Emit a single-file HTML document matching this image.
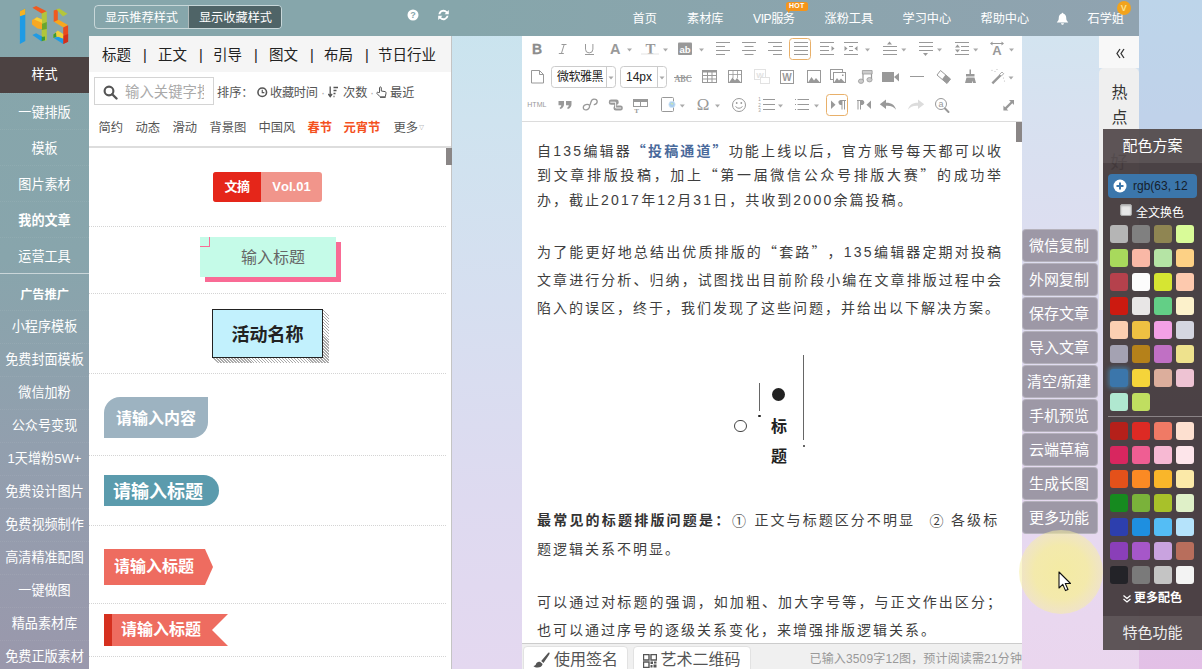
<!DOCTYPE html>
<html lang="zh-CN">
<head>
<meta charset="utf-8">
<title>135编辑器</title>
<style>
*{box-sizing:border-box;margin:0;padding:0}
html,body{width:1202px;height:669px;overflow:hidden}
body{position:relative;text-spacing-trim:space-all;font-kerning:none;font-family:"Liberation Sans","Noto Sans CJK SC",sans-serif;font-size:14px;color:#333;
background:linear-gradient(180deg,#c8e4ee 0%,#cfe3ef 18%,#d6dff0 45%,#dedaf0 75%,#e4d8f0 100%);}
.abs{position:absolute}
/* header */
#hdr{position:absolute;left:0;top:0;width:1139px;height:36px;background:linear-gradient(90deg,#86a6ab 0%,#86a6ab 40%,#90a3b0 100%);}
#hdr .nav{position:absolute;top:2px;height:36px;line-height:35px;color:#fff;font-size:12.2px;white-space:nowrap}
.btng{position:absolute;left:94px;top:5px;height:24px;width:188px;border:1px solid rgba(255,255,255,.55);border-radius:4px;overflow:hidden;color:#fff;font-size:12.2px;line-height:24px}
.btng span{position:absolute;top:0;height:22px;text-align:center}
/* sidebar */
#side{position:absolute;left:0;top:36px;width:89px;height:633px;background:linear-gradient(180deg,#86a6ab 0%,#88a5ac 35%,#929fae 65%,#9a98ac 100%);color:#fff;text-align:center;font-size:13.1px}
#side div{position:absolute;left:0;width:89px;white-space:nowrap}
#side .a{height:36px;line-height:38px;border-top:1px dotted rgba(255,255,255,.07)}
#side .b{height:33px;line-height:32px;border-top:1px dotted rgba(255,255,255,.07)}
/* left panel */
#lp{position:absolute;left:89px;top:36px;width:363px;height:633px;background:#fff;overflow:hidden}
#lp .tabs{position:absolute;left:0;top:0;width:363px;height:36px;background:#f5f5f5;font-size:14.5px;line-height:38px;color:#222;white-space:nowrap}
#lp .tabs span{position:absolute;top:0}
.cat{position:absolute;top:83px;font-size:12.3px;color:#555;white-space:nowrap;line-height:18px;margin-left:-0.5px}
.sep{position:absolute;left:0;width:357px;border-top:1px dotted #d4d4d4;height:0}
/* editor */
#ed{position:absolute;left:522px;top:36px;width:500px;height:633px;background:#fff;overflow:hidden}
#ed p{position:absolute;left:15px;width:464px;font-size:14px;letter-spacing:2px;color:#3e3e3e;text-align:justify;white-space:nowrap}
.ln{position:absolute;left:15px;white-space:nowrap;font-size:14px;letter-spacing:2px;color:#3e3e3e;height:20px;line-height:20px}
/* float buttons */
.fb{position:absolute;left:1022px;width:76px;height:33px;padding-right:2px;background:#9d98a6;color:#fff;font-size:15px;line-height:31px;text-align:center;border-radius:4px;border:1px solid rgba(255,255,255,.25);white-space:nowrap}
/* color panel */
#cp{position:absolute;left:1103px;top:129px;width:99px;height:521px;background:rgba(67,58,60,.95)}
.sw{position:absolute;width:18px;height:18px;border-radius:3px}
.ln.j{width:466px;text-align:justify;text-align-last:justify}
.q{font-family:"Noto Sans CJK SC",sans-serif}
.d{letter-spacing:2.25px}
</style>
</head>
<body>
<div id="hdr">
<div class="btng"><span style="left:0;width:93px">显示推荐样式</span><span style="left:93px;width:94px;background:#4f6467;border-left:1px solid rgba(255,255,255,.55)">显示收藏样式</span></div>
<svg class="abs" style="left:407px;top:9px" width="12" height="12" viewBox="0 0 12 12"><circle cx="6" cy="6" r="5.5" fill="#fff"/><text x="6" y="9.2" font-size="9" font-weight="bold" text-anchor="middle" fill="#86a6ab" font-family="Liberation Sans, sans-serif">?</text></svg>
<svg class="abs" style="left:437px;top:9px" width="13" height="12" viewBox="0 0 13 12"><path d="M1.5 5.2A5 5 0 0 1 10.2 2.6L11.8 1V5.2H7.6L9 3.8A3.3 3.3 0 0 0 3.3 5.2Z M11.5 6.8A5 5 0 0 1 2.8 9.4L1.2 11V6.8H5.4L4 8.2A3.3 3.3 0 0 0 9.7 6.8Z" fill="#fff"/></svg>
<div class="nav" style="left:632.5px">首页</div>
<div class="nav" style="left:687px">素材库</div>
<div class="nav" style="left:753px;letter-spacing:-0.5px">VIP服务</div><div class="abs" style="left:788px;top:9px;width:0;height:0;border-left:2px solid #f6951a;border-right:2px solid transparent;border-top:2px solid #f6951a;border-bottom:2px solid transparent"></div>
<div class="abs" style="left:786px;top:2px;width:21.500px;height:8.500px;background:#f6951a;border-radius:2.500px;color:#fff;font-size:7px;line-height:8.500px;text-align:center;font-weight:bold;letter-spacing:0.3px">HOT</div>
<div class="nav" style="left:824.5px">涨粉工具</div>
<div class="nav" style="left:902.5px">学习中心</div>
<div class="nav" style="left:980.5px">帮助中心</div>
<svg class="abs" style="left:1055.5px;top:11.5px" width="13" height="13" viewBox="0 0 14 14"><path d="M7 0.8C7.6 0.8 8 1.2 8 1.8C10 2.4 11 4 11 6.2C11 8.6 11.6 9.8 13 10.8V11.4H1V10.8C2.4 9.8 3 8.6 3 6.2C3 4 4 2.4 6 1.8C6 1.2 6.4 0.8 7 0.8ZM5.4 12H8.6C8.6 13 7.9 13.6 7 13.6C6.1 13.6 5.4 13 5.4 12Z" fill="#fff"/></svg>
<div class="nav" style="left:1087.5px">石学姐</div>
<div class="abs" style="left:1116.5px;top:0.5px;width:14.6px;height:14.6px;border-radius:8px;background:#f2a31d;color:#fbe28c;font-size:9px;line-height:14px;text-align:center;font-weight:bold">V</div>
</div>
<div id="side">
<div class="a" style="top:21px;background:#4c4242;line-height:36px;border-top:none">样式</div>
<div class="a" style="top:57px">一键排版</div>
<div class="a" style="top:93px">模板</div>
<div class="a" style="top:129px">图片素材</div>
<div class="a" style="top:165px;font-weight:bold">我的文章</div>
<div class="a" style="top:201px">运营工具</div>
<div style="top:237px;height:1px;background:rgba(255,255,255,.55)"></div>
<div class="b" style="top:241px;font-weight:bold;border-top:none;font-size:12.2px;line-height:37px">广告推广</div>
<div class="b" style="top:274px">小程序模板</div>
<div class="b" style="top:307px">免费封面模板</div>
<div class="b" style="top:340px">微信加粉</div>
<div class="b" style="top:373px">公众号变现</div>
<div class="b" style="top:406px">1天增粉5W+</div>
<div class="b" style="top:439px">免费设计图片</div>
<div class="b" style="top:472px">免费视频制作</div>
<div class="b" style="top:505px">高清精准配图</div>
<div class="b" style="top:538px">一键做图</div>
<div class="b" style="top:571px">精品素材库</div>
<div class="b" style="top:604px">免费正版素材</div>
</div>
<div id="lp">
<div class="tabs"><span style="left:13px">标题</span><span style="left:54px">|</span><span style="left:69px">正文</span><span style="left:110px">|</span><span style="left:124px">引导</span><span style="left:165px">|</span><span style="left:180px">图文</span><span style="left:221px">|</span><span style="left:235px">布局</span><span style="left:276px">|</span><span style="left:289px">节日行业</span></div>
<div class="abs" style="left:5px;top:41px;width:120px;height:28px;border:1px solid #d4d4d4;overflow:hidden"><svg class="abs" style="left:7.500px;top:6.500px" width="15" height="15" viewBox="0 0 14 14"><circle cx="5.6" cy="5.6" r="4.1" fill="none" stroke="#555" stroke-width="2"/><path d="M8.6 8.6L12.6 12.6" stroke="#555" stroke-width="2.2" stroke-linecap="round"/></svg><span class="abs" style="left:30px;top:0;width:79px;overflow:hidden;line-height:29px;font-size:14.4px;color:#aaa;white-space:nowrap">输入关键字搜</span></div>
<span class="abs" style="left:128px;top:48px;font-size:12.2px;line-height:18px;color:#555;white-space:nowrap;">排序：</span><svg class="abs" style="left:168px;top:51px" width="10.500" height="10.500" viewBox="0 0 10 10"><circle cx="5" cy="5" r="4.100" fill="none" stroke="#555" stroke-width="1.500"/><path d="M5 2.6V5.3H7" fill="none" stroke="#555" stroke-width="1.1"/></svg><span class="abs" style="left:181px;top:48px;font-size:12.2px;line-height:18px;color:#555;white-space:nowrap;letter-spacing:-0.3px">收藏时间</span><span class="abs" style="left:232px;top:48px;font-size:12.2px;line-height:18px;color:#555;white-space:nowrap;color:#aaa">·</span><svg class="abs" style="left:239px;top:50px" width="10" height="12" viewBox="0 0 10 12"><path d="M2.2 0.5V9.5M0.3 8L2.2 10.6L4.1 8" fill="none" stroke="#555" stroke-width="1.3"/><path d="M5.5 1.5H10M5.5 4.5H8.5M5.5 7.5H7.5M5.5 10.5H6.5" stroke="#555" stroke-width="1.3"/></svg><span class="abs" style="left:254px;top:48px;font-size:12.2px;line-height:18px;color:#555;white-space:nowrap;">次数</span><span class="abs" style="left:281px;top:48px;font-size:12.2px;line-height:18px;color:#555;white-space:nowrap;color:#aaa">·</span><svg class="abs" style="left:287px;top:50px" width="11" height="12" viewBox="0 0 11 12"><path d="M3.5 6.5V1.8C3.5 0.6 5.3 0.6 5.3 1.8V5L9 5.6C9.8 5.8 10.2 6.3 10 7.2L9.3 10.8H4.2L1 7.6C0.3 6.8 1.3 5.8 2.2 6.5Z" fill="none" stroke="#555" stroke-width="1"/><path d="M4 11.6H9.6" stroke="#555" stroke-width="1"/></svg><span class="abs" style="left:301px;top:48px;font-size:12.2px;line-height:18px;color:#555;white-space:nowrap;">最近</span><span class="cat" style="left:10px;">简约</span><span class="cat" style="left:47px;">动态</span><span class="cat" style="left:84px;">滑动</span><span class="cat" style="left:121px;">背景图</span><span class="cat" style="left:170px;">中国风</span><span class="cat" style="left:219px;color:#f4511e;font-weight:bold">春节</span><span class="cat" style="left:255px;color:#f4511e;font-weight:bold">元宵节</span><span class="cat" style="left:305px;">更多</span><span class="abs" style="left:329px;top:88px;font-size:5px;color:#777;line-height:6px;left:330px">▽</span>
<div class="abs" style="left:0;top:110px;width:363px;height:2px;background:#ddd"></div><div class="abs" style="left:362px;top:0;width:1px;height:633px;background:#c4c4c4"></div><div class="abs" style="left:357px;top:112px;width:6px;height:17px;background:#8a8686"></div>
<div class="abs" style="left:124px;top:136px;width:109px;height:30px;border-radius:3px;overflow:hidden;background:#f1958b;color:#fff;font-weight:bold;font-size:13px;line-height:29px;text-align:center"><span class="abs" style="left:0;top:0;width:48px;height:30px;background:#e5261a;letter-spacing:-0.5px">文摘</span><span class="abs" style="left:48px;top:0;width:61px;height:30px">Vol.01</span></div>
<div class="sep" style="top:190px"></div><div class="abs" style="left:111px;top:201px;width:136px;height:40px;background:#c5fbe8;box-shadow:5px 5px 0 #f96b95;color:#666;font-size:16px;line-height:42px;text-align:center;padding-left:10px">输入标题<i class="abs" style="left:0;top:0;width:10px;height:10px;border-right:1px solid #f96b95;border-bottom:1px solid #f96b95"></i></div>
<div class="sep" style="top:257px"></div><div class="abs" style="left:123px;top:273px;width:117px;height:54px;background:repeating-linear-gradient(45deg,#aaa 0,#aaa 1px,#fff 1px,#fff 2.1px);clip-path:polygon(111px 0,117px 6px,117px 54px,6px 54px,0 49px,111px 49px)"></div><div class="abs" style="left:123px;top:273px;width:111px;height:49px;background:#c2f1fd;border:1px solid #222;color:#222;font-size:18px;font-weight:bold;line-height:50px;text-align:center">活动名称</div>
<div class="sep" style="top:337px"></div><div class="abs" style="left:15px;top:361px;width:104px;height:41px;background:#9db3c1;border-radius:16px 0 16px 0;color:#fff;font-size:16px;font-weight:bold;line-height:43px;text-align:center">请输入内容</div>
<div class="sep" style="top:419px"></div><div class="abs" style="left:15px;top:439px;width:115px;height:31px;background:#5b9bad;border-radius:0 16px 16px 0;color:#fff;font-size:18px;font-weight:bold;line-height:34px;padding-left:9px;white-space:nowrap">请输入标题</div>
<div class="sep" style="top:489px"></div><div class="abs" style="left:15px;top:513px;width:109px;height:36px;background:#ee6c60;clip-path:polygon(0 0,101px 0,109px 18px,101px 36px,0 36px);color:#fff;font-size:16px;font-weight:bold;line-height:36px;padding-left:10px;white-space:nowrap">请输入标题</div>
<div class="sep" style="top:567px"></div><div class="abs" style="left:15px;top:578px;width:124px;height:32px;background:#ee6c60;border-left:8px solid #d5301f;clip-path:polygon(0 0,124px 0,108px 16px,124px 32px,0 32px);color:#fff;font-size:16px;font-weight:bold;line-height:32px;padding-left:9px;white-space:nowrap">请输入标题</div>
<div class="sep" style="top:620px"></div></div>
<div id="ed">
<svg class="abs" style="left:0;top:0" width="500" height="86" viewBox="522 36 500 86">
<text x="532.1" y="54.3" font-size="14" font-weight="bold" fill="#8c8c8c" stroke="#8c8c8c" stroke-width="0.3" font-family="Liberation Sans, sans-serif">B</text>
<path d="M561.5 44.5h5M558.8 53.5h5M564.2 44.5l-2.800 9" fill="none" stroke="#999" stroke-width="1"/>
<path d="M585.5 44v5.2a3.7 3.7 0 0 0 7.4 0V44" fill="none" stroke="#999" stroke-width="1"/><rect x="585" y="54" width="9" height="1" fill="#999"/>
<text x="610" y="54.2" font-size="14.5" font-weight="bold" fill="#999" font-family="Liberation Sans, sans-serif">A</text>
<path d="M627.0 48.5h5l-2.5 3z" fill="#aaa"/>
<text x="645.6" y="54" font-size="15" font-weight="bold" fill="#999" font-family="Liberation Serif, serif">T</text><rect x="641" y="53.5" width="18" height="1" fill="#e4e4e4"/>
<path d="M663.0 48.5h5l-2.5 3z" fill="#aaa"/>
<rect x="678" y="42.5" width="14" height="12.5" rx="1" fill="#999"/><text x="685" y="52.5" font-size="9.5" font-weight="bold" text-anchor="middle" fill="#fff" font-family="Liberation Sans, sans-serif">ab</text>
<path d="M699.0 48.5h5l-2.5 3z" fill="#aaa"/>
<rect x="716" y="42" width="14" height="1" fill="#999"/>
<rect x="716" y="46" width="9" height="1" fill="#999"/>
<rect x="716" y="50" width="14" height="1" fill="#999"/>
<rect x="716" y="54" width="9" height="1" fill="#999"/>
<rect x="742" y="42" width="14" height="1" fill="#999"/>
<rect x="744.5" y="46" width="9" height="1" fill="#999"/>
<rect x="742" y="50" width="14" height="1" fill="#999"/>
<rect x="744.5" y="54" width="9" height="1" fill="#999"/>
<rect x="768" y="42" width="14" height="1" fill="#999"/>
<rect x="773" y="46" width="9" height="1" fill="#999"/>
<rect x="768" y="50" width="14" height="1" fill="#999"/>
<rect x="773" y="54" width="9" height="1" fill="#999"/>
<rect x="789.5" y="38.5" width="21" height="21" rx="3" fill="#fff" stroke="#e8b06a"/>
<rect x="794" y="42" width="14" height="1" fill="#999"/>
<rect x="794" y="46" width="14" height="1" fill="#999"/>
<rect x="794" y="50" width="14" height="1" fill="#999"/>
<rect x="794" y="54" width="14" height="1" fill="#999"/>
<rect x="820" y="42" width="14" height="1" fill="#999"/>
<rect x="820" y="46" width="9" height="1" fill="#999"/>
<rect x="820" y="50" width="9" height="1" fill="#999"/>
<rect x="820" y="54" width="14" height="1" fill="#999"/>
<path d="M831.5 46v5l3-2.5z" fill="#999"/>
<rect x="844" y="42" width="14" height="1" fill="#999"/>
<rect x="849" y="46" width="4" height="1" fill="#999"/>
<rect x="849" y="50" width="4" height="1" fill="#999"/>
<rect x="844" y="54" width="14" height="1" fill="#999"/>
<path d="M844.5 46v5l3-2.5z M857.5 46v5l-3-2.5z" fill="#999"/>
<path d="M865.0 48.5h5l-2.5 3z" fill="#aaa"/>
<path d="M887 44.5h5l-2.5-3z" fill="#999"/>
<rect x="883" y="46" width="14" height="1" fill="#999"/>
<rect x="883" y="50" width="14" height="1" fill="#999"/>
<rect x="883" y="54" width="14" height="1" fill="#999"/>
<path d="M901.3 48.5h5l-2.5 3z" fill="#aaa"/>
<rect x="919" y="42" width="14" height="1" fill="#999"/>
<rect x="919" y="46" width="14" height="1" fill="#999"/>
<rect x="919" y="50" width="14" height="1" fill="#999"/>
<path d="M923 53h5l-2.5 3z" fill="#999"/>
<path d="M937.0 48.5h5l-2.5 3z" fill="#aaa"/>
<rect x="955" y="42" width="14" height="1" fill="#999"/><rect x="955" y="54" width="14" height="1" fill="#999"/><rect x="961" y="46" width="8" height="1" fill="#999"/><rect x="961" y="50" width="8" height="1" fill="#999"/><path d="M955 47.5h5l-2.5-3z M955 49.5h5l-2.5 3z" fill="#999"/>
<path d="M973.2 48.5h5l-2.5 3z" fill="#aaa"/>
<text x="997" y="55" font-size="13" font-weight="bold" text-anchor="middle" fill="#999" font-family="Liberation Sans, sans-serif">A</text><path d="M991 43.5h12" stroke="#999" stroke-width="1"/><path d="M992.5 41.5l-2.5 2l2.5 2z M1001.5 41.5l2.5 2l-2.5 2z" fill="#999"/>
<path d="M1009.0 48.5h5l-2.5 3z" fill="#aaa"/>
<path d="M531.5 70.5h8l4 4v8.5h-12z M539.5 70.5v4h4" fill="#fff" stroke="#999" stroke-width="1"/>
<rect x="551.5" y="66.500" width="64" height="21" rx="3" fill="#fff" stroke="#ccc"/><path d="M606.5 67v20" stroke="#ccc"/>
<text x="557" y="81.300" font-size="12" fill="#222" letter-spacing="-0.5" font-family="Liberation Sans, Noto Sans CJK SC, sans-serif">微软雅黑</text>
<path d="M608.5 76.5h5l-2.5 3z" fill="#aaa"/>
<rect x="620.5" y="66.500" width="46" height="21" rx="3" fill="#fff" stroke="#ccc"/><path d="M657.5 67v20" stroke="#ccc"/>
<text x="626" y="81.300" font-size="12" fill="#222" font-family="Liberation Sans, sans-serif">14px</text>
<path d="M659.5 76.5h5l-2.5 3z" fill="#aaa"/>
<text x="683" y="81.500" font-size="11" font-weight="bold" text-anchor="middle" fill="#999" font-family="Liberation Serif, serif" textLength="17" lengthAdjust="spacingAndGlyphs">ABC</text><rect x="674" y="77" width="18" height="1" fill="#999"/>
<rect x="702.5" y="70.500" width="14" height="12" fill="#fff" stroke="#999"/><rect x="702" y="70" width="15" height="2.500" fill="#999"/><path d="M702 75.500h15M702 79h15M707.500 72v11M712 72v11" stroke="#999" stroke-width="1"/>
<rect x="728.5" y="70.500" width="13" height="12" fill="#fff" stroke="#999"/><path d="M728 74.500h14M733 70v8M737.500 70v8" stroke="#999" stroke-width="0.8"/><path d="M729 82.500l3.500-5l2.500 3l2-2.500l4 4.500z" fill="#999"/>
<rect x="754.5" y="69.500" width="11" height="10" fill="#fff" stroke="#e2e2e2"/><text x="760" y="78" font-size="8" text-anchor="middle" fill="#e2e2e2" font-weight="bold" font-family="Liberation Sans, sans-serif">W</text><rect x="760.5" y="77.500" width="9" height="6" fill="#fff" stroke="#e2e2e2"/>
<rect x="780.5" y="70.500" width="13" height="13" fill="#fff" stroke="#999"/><text x="787" y="81" font-size="10" text-anchor="middle" fill="#999" font-weight="bold" font-family="Liberation Sans, sans-serif">W</text>
<rect x="807.5" y="70.500" width="13" height="12" fill="#fff" stroke="#999"/><path d="M808 82.500l3.500-5.500l2.500 3.500l2-2.500l4 4.500z" fill="#999"/>
<rect x="830.5" y="69.500" width="12" height="10" fill="#fff" stroke="#999"/><rect x="833.5" y="72.500" width="12" height="10" fill="#fff" stroke="#999"/><path d="M834 82.500l3-4.500l2 2.500l2-2l4 4z" fill="#999"/><rect x="842" y="74.500" width="1.500" height="1.500" fill="#999"/>
<path d="M863 72.500v8.500M871.500 71v8.500" stroke="#999" stroke-width="1.200" fill="none"/><path d="M862.400 70.500h9.700v3.500h-9.700z" fill="#ccc" stroke="#999" stroke-width="0.8"/><ellipse cx="861" cy="81.200" rx="2.600" ry="2.200" fill="#ccc" stroke="#999" stroke-width="0.8"/><ellipse cx="869.500" cy="79.700" rx="2.600" ry="2.200" fill="#ccc" stroke="#999" stroke-width="0.8"/>
<rect x="882" y="72" width="12" height="10" fill="#999"/><path d="M894 77l5-4v8.500z" fill="#999"/>
<rect x="910" y="76" width="14" height="1" fill="#999"/>
<path d="M940.500 70.500l10 8.500l-3.500 4.500l-10-8.500z" fill="#fff" stroke="#999" stroke-width="1"/><path d="M945.500 74.700l5 4.300l-3.500 4.500l-5-4.300z" fill="#999"/>
<path d="M969.500 69.500h1.500v4.500h3.500v2.500h-8.500v-2.500h3.500z" fill="#999"/><path d="M966.500 77.500h8l1.500 5.500h-3l-0.700-2.500l-0.300 2.500h-7z" fill="#999"/>
<path d="M991.500 82.500l10.500-10.500l1.700 1.700l-10.500 10.500z" fill="#999"/><path d="M999.600 74.400l2.400-2.400l1.700 1.700l-2.400 2.400z" fill="#fff" stroke="#999" stroke-width="0.7"/><circle cx="992" cy="70.300" r="0.600" fill="#bbb"/><circle cx="995" cy="71.500" r="0.600" fill="#bbb"/><circle cx="997" cy="69.500" r="0.600" fill="#bbb"/><circle cx="1003.500" cy="78" r="0.600" fill="#bbb"/><circle cx="1004.500" cy="81" r="0.600" fill="#bbb"/>
<path d="M1008.5 76.5h5l-2.5 3z" fill="#aaa"/>
<text x="527.3" y="107.400" font-size="7" fill="#999" font-family="Liberation Sans, sans-serif">HTML</text>
<path d="M558.500 101h5.500v3.200q0 3.300-3.500 4.800l-1-1q1.800-1.200 1.800-2.800h-2.800z M566 101h5.500v3.200q0 3.300-3.500 4.800l-1-1q1.800-1.200 1.800-2.800h-2.800z" fill="#999"/>
<path d="M589.6 105.4C589.6 110.5 583.2 111.3 583.3 107.5C583.4 104.2 588 103.8 589.6 105.4C591.5 103.5 590 99.3 594 99.1C598.2 99 598.2 103.8 594.3 104.6" fill="none" stroke="#999" stroke-width="1.3" stroke-linecap="round"/>
<rect x="610.1" y="100.9" width="7.3" height="2.6" rx="1" fill="#999" stroke="#999" stroke-width="2.6"/><rect x="614.8" y="106.7" width="6.7" height="2.6" rx="1" fill="#999" stroke="#999" stroke-width="2.6"/><rect x="614.2" y="102" width="2.6" height="6" fill="#999"/><path d="M610.3 102.2H615.6V108H621.2" fill="none" stroke="#fff" stroke-width="0.9"/>
<rect x="633.500" y="99.500" width="14" height="7" fill="#fff" stroke="#999"/><rect x="633" y="99" width="15" height="3" fill="#999"/><path d="M640.500 102v5" stroke="#999"/><text x="636.500" y="112.500" font-size="7" font-weight="bold" text-anchor="middle" fill="#999" font-family="Liberation Serif, serif">T</text>
<rect x="661.500" y="97.500" width="12" height="14" rx="1" fill="#fff" stroke="#999"/><circle cx="672" cy="104.500" r="3.200" fill="#a9cdee"/><circle cx="672" cy="104.500" r="3.200" fill="none" stroke="#d6e9f8" stroke-width="0.800"/><path d="M670.500 103.500q1.500-1.500 3 0.500q-1.500 1.500-3-0.500z" fill="#c7e6b5"/>
<path d="M679.8 104.5h5l-2.5 3z" fill="#aaa"/>
<text x="703" y="110.300" font-size="17" text-anchor="middle" fill="#999" font-family="Liberation Serif, serif">Ω</text>
<path d="M715.0 104.5h5l-2.5 3z" fill="#aaa"/>
<circle cx="739" cy="105" r="6.500" fill="#fff" stroke="#999" stroke-width="1"/><circle cx="736.700" cy="103" r="0.900" fill="#999"/><circle cx="741.300" cy="103" r="0.900" fill="#999"/><path d="M735.500 106.500q3.500 3.500 7 0" fill="none" stroke="#999" stroke-width="1"/>
<rect x="763" y="99" width="12" height="1" fill="#999"/><rect x="763" y="104" width="12" height="1" fill="#999"/><rect x="763" y="109" width="12" height="1" fill="#999"/>
<text x="759.500" y="101.2" font-size="4.500" text-anchor="middle" fill="#999" font-family="Liberation Sans, sans-serif">1</text>
<text x="759.500" y="106.7" font-size="4.500" text-anchor="middle" fill="#999" font-family="Liberation Sans, sans-serif">2</text>
<text x="759.500" y="112.2" font-size="4.500" text-anchor="middle" fill="#999" font-family="Liberation Sans, sans-serif">3</text>
<path d="M778.0 104.5h5l-2.5 3z" fill="#aaa"/>
<rect x="797.500" y="99" width="11.500" height="1" fill="#999"/><rect x="795" y="99" width="1" height="1" fill="#999"/>
<rect x="797.500" y="104" width="11.500" height="1" fill="#999"/><rect x="795" y="104" width="1" height="1" fill="#999"/>
<rect x="797.500" y="109" width="11.500" height="1" fill="#999"/><rect x="795" y="109" width="1" height="1" fill="#999"/>
<path d="M814.0 104.5h5l-2.5 3z" fill="#aaa"/>
<rect x="826.5" y="94.500" width="21" height="21" rx="3" fill="#fff" stroke="#e8b06a"/>
<path d="M831 100.500v8.500l4.500-4.250z" fill="#999"/><path d="M840.500 100h5.500v1h-1v8.500h-1v-8.500h-1.500v8.500h-1v-4.500a2.500 2.500 0 0 1-1-5z" fill="#999"/>
<path d="M871 100.500v8.500l-4.500-4.250z" fill="#999"/><path d="M857 100h5.500a2.600 2.600 0 0 1 0 5h-1.500v4.500h-1v-8.500h-1.500v8.500h-1v-8.500h-0.500z" fill="#999"/>
<path d="M886 99.500v3.200c6 0 8.800 2.300 10 7c-2.200-3.300-5-4.200-10-4v3.300l-6.200-4.700z" fill="#999"/>
<path d="M918 99.500v3.200c-6 0-8.800 2.300-10 7c2.200-3.300 5-4.200 10-4v3.300l6.200-4.700z" fill="#dcdcdc"/>
<circle cx="941" cy="104" r="5.500" fill="#fff" stroke="#999" stroke-width="1"/><path d="M945 108.500l3.500 3.500" stroke="#999" stroke-width="2" stroke-linecap="round"/><text x="941" y="106.800" font-size="9" text-anchor="middle" fill="#999" font-family="Liberation Sans, sans-serif">a</text>
<path d="M1014 100v5l-1.700-1.700l-5.600 5.600l1.700 1.700h-5v-5l1.700 1.700l5.600-5.600l-1.700-1.700z" fill="#999"/>
</svg>
<div class="abs" style="left:0;top:85px;width:500px;height:1px;background:#dcdcdc"></div><div class="abs" style="left:493px;top:86px;width:7px;height:521px;background:#fff"></div><div class="abs" style="left:494px;top:86px;width:6px;height:20px;background:#8a8686"></div>
<div class="ln j" style="top:104px;">自<span class="d">135</span>编辑器<b style="color:#4a6a9b"><span class="q">“</span>投稿通道<span class="q">”</span></b>功能上线以后，官方账号每天都可以收</div>
<div class="ln j" style="top:128px;">到文章排版投稿，加上<span class="q">“</span>第一届微信公众号排版大赛<span class="q">”</span>的成功举</div>
<div class="ln" style="top:154px;">办，截止<span class="d">2017</span>年<span class="d">12</span>月<span class="d">31</span>日，共收到<span class="d">2000</span>余篇投稿。</div>
<div class="ln j" style="top:204.5px;">为了能更好地总结出优质排版的<span class="q">“</span>套路<span class="q">”</span>，<span class="d">135</span>编辑器定期对投稿</div>
<div class="ln j" style="top:233.5px;">文章进行分析、归纳，试图找出目前阶段小编在文章排版过程中会</div>
<div class="ln" style="top:261.5px;">陷入的误区，终于，我们发现了这些问题，并给出以下解决方案。</div>
<div class="abs" style="left:281px;top:319px;width:1px;height:85px;background:#666"></div><div class="abs" style="left:280.5px;top:408.5px;width:2px;height:2px;border-radius:1px;background:#333"></div><div class="abs" style="left:237px;top:346.5px;width:1px;height:28px;background:#666"></div><div class="abs" style="left:236.3px;top:379px;width:2.4px;height:2.4px;border-radius:2px;background:#222"></div><div class="abs" style="left:249.5px;top:351.7px;width:13.6px;height:13.6px;border-radius:7px;background:#222"></div><div class="abs" style="left:212.2px;top:383.5px;width:12.4px;height:12.4px;border-radius:7px;border:1px solid #444;background:#fff"></div><div class="abs" style="left:249px;top:375.5px;width:16px;font-size:16px;font-weight:bold;line-height:30px;color:#222;text-align:center">标<br>题</div>
<div class="ln" style="top:474px;letter-spacing:2.2px"><b style="color:#333">最常见的标题排版问题是：</b></div>
<div class="ln" style="top:474px;left:210px;letter-spacing:0"><span class="q">①</span></div>
<div class="ln" style="top:474px;left:232.5px;letter-spacing:2.05px">正文与标题区分不明显</div>
<div class="ln" style="top:474px;left:407.5px;letter-spacing:0"><span class="q">②</span></div>
<div class="ln" style="top:474px;left:429px;letter-spacing:2.1px">各级标</div>
<div class="ln" style="top:503px;">题逻辑关系不明显。</div>
<div class="ln j" style="top:556.3px;">可以通过对标题的强调，如加粗、加大字号等，与正文作出区分；</div>
<div class="ln" style="top:584px;">也可以通过序号的逐级关系变化，来增强排版逻辑关系。</div>
<div class="abs" style="left:0;top:607px;width:500px;height:26px;background:#f0f0f0;border-top:1px solid #ccc"></div><div class="abs" style="left:1px;top:610px;width:105px;height:26px;background:#fff;border:1px solid #e2e2e2;border-radius:4px 4px 0 0;font-size:16px;color:#555;line-height:26px;white-space:nowrap;letter-spacing:0px"><svg class="abs" style="left:9px;top:5px" width="17" height="16" viewBox="0 0 17 16"><path d="M16.3 0.6c0.6 0.5 0.3 1.4-0.2 2.2l-5.6 8.200l-2.300-1.900l6.400-7.700c0.500-0.600 1.200-1.200 1.700-0.800z" fill="#555"/><path d="M7.300 10l2.300 2c-0.300 2.300-2.600 3.600-5 3.600c-1.700 0-3.200-0.600-4.200-1.600c1.600-0.100 2.300-0.900 2.700-2.200c0.500-1.500 2.300-2.700 4.200-1.800z" fill="#555"/></svg><span class="abs" style="left:30px;top:0">使用签名</span></div><div class="abs" style="left:110.5px;top:610px;width:118px;height:26px;background:#fff;border:1px solid #e2e2e2;border-radius:4px 4px 0 0;font-size:16px;color:#555;line-height:26px;white-space:nowrap;letter-spacing:0px"><svg class="abs" style="left:9px;top:7px" width="14" height="14" viewBox="0 0 14 14"><path d="M0.5 0.5h5.500v5.500h-5.500z M8 0.500h5.500v5.500h-5.500z M0.500 8h5.500v5.500h-5.500z" fill="#fff" stroke="#555" stroke-width="1.400"/><path d="M7.500 7.500h2.500v2.500h-2.500z M11 7.500h2.500v2h-2.500z M7.500 11h2v2.500h-2z M10.500 10.500h3v3h-3z" fill="#555"/></svg><span class="abs" style="left:27px;top:0">艺术二维码</span></div><div class="abs" style="left:287.5px;top:614px;font-size:12px;line-height:18px;color:#999;white-space:nowrap;letter-spacing:0.15px">已输入3509字12图，预计阅读需21分钟</div></div>
<div class="abs" style="left:1022px;top:36px;width:117px;height:633px;background:linear-gradient(180deg,#d3e4f0 0%,#d7e1f0 12%,#dcdef0 30%,#e2dbf0 58%,#e8d8f0 84%,#ead6ee 100%)"></div>
<div class="abs" style="left:1139px;top:0;width:63px;height:669px;background:linear-gradient(180deg,#bdd5ea 0%,#c3cfea 35%,#d3c8ea 65%,#e3c0e6 100%)"></div>
<div class="abs" style="left:1099px;top:36px;width:40px;height:32px;background:#f8f8f8"></div><div class="abs" style="left:1099px;top:68px;width:40px;height:242px;background:#efefef;border-radius:5px 5px 0 0"></div><svg class="abs" style="left:1115.500px;top:47.500px" width="9" height="11" viewBox="0 0 9 11"><path d="M4 1L1 5.500L4 10M8 1L5 5.500L8 10" fill="none" stroke="#333" stroke-width="1.300"/></svg><div class="abs" style="left:1099.5px;top:80.3px;width:40px;text-align:center;font-size:16px;line-height:25px;color:#333">热<br>点</div><div class="abs" style="left:1099px;top:150px;width:40px;text-align:center;font-size:17px;line-height:25px;color:#333">好</div>
<div class="fb" style="top:229px">微信复制</div><div class="fb" style="top:263px">外网复制</div><div class="fb" style="top:297px">保存文章</div><div class="fb" style="top:331px">导入文章</div><div class="fb" style="top:365px">清空/新建</div><div class="fb" style="top:399px">手机预览</div><div class="fb" style="top:433px">云端草稿</div><div class="fb" style="top:467px">生成长图</div><div class="fb" style="top:501px">更多功能</div>
<div class="abs" style="left:1019px;top:529.5px;width:84px;height:84px;border-radius:42px;background:radial-gradient(circle,rgba(246,238,150,.85) 0%,rgba(246,238,155,.8) 45%,rgba(246,238,165,.5) 72%,rgba(246,238,175,0) 100%)"></div><svg class="abs" style="left:1057.5px;top:570.5px" width="14" height="21" viewBox="0 0 14 21"><path d="M1 1V17L4.800 13.400L7.500 19.600L10 18.500L7.300 12.500H12.500Z" fill="#fff" stroke="#111" stroke-width="1.100" stroke-linejoin="round"/></svg>
<div id="cp">
<div class="abs" style="left:0;top:0;width:99px;height:34px;background:rgba(255,255,255,.09);color:#fff;font-size:15px;line-height:33px;text-align:center">配色方案</div><div class="abs" style="left:5px;top:44.500px;width:89px;height:24px;background:#3b76ab;border-radius:4px;overflow:hidden"><svg class="abs" style="left:5px;top:5px" width="14" height="14" viewBox="0 0 14 14"><circle cx="7" cy="7" r="6.500" fill="#fff"/><path d="M7 3.500v7M3.500 7h7" stroke="#3b76ab" stroke-width="2"/></svg><span class="abs" style="left:25px;top:0;line-height:24px;font-size:12px;color:#16202c;white-space:nowrap">rgb(63, 12</span></div><div class="abs" style="left:17px;top:75px;width:12px;height:12px;background:#e8e8e8;border:1px solid #aaa;border-radius:2px;box-shadow:inset 0 1px 2px rgba(0,0,0,.25)"></div><div class="abs" style="left:33px;top:75px;font-size:12px;line-height:18px;color:#fff;white-space:nowrap">全文换色</div>
<i class="sw" style="left:7px;top:96px;background:#b5b5b5"></i><i class="sw" style="left:29px;top:96px;background:#808080"></i><i class="sw" style="left:51px;top:96px;background:#8f8552"></i><i class="sw" style="left:73px;top:96px;background:#d9fb98"></i><i class="sw" style="left:7px;top:120px;background:#a8d95c"></i><i class="sw" style="left:29px;top:120px;background:#f9b8a6"></i><i class="sw" style="left:51px;top:120px;background:#b5e4a5"></i><i class="sw" style="left:73px;top:120px;background:#fdd185"></i><i class="sw" style="left:7px;top:144px;background:#b5414c"></i><i class="sw" style="left:29px;top:144px;background:#fcfcfc"></i><i class="sw" style="left:51px;top:144px;background:#d6e532"></i><i class="sw" style="left:73px;top:144px;background:#fdc9ae"></i><i class="sw" style="left:7px;top:168px;background:#cc1a10"></i><i class="sw" style="left:29px;top:168px;background:#e8e6e6"></i><i class="sw" style="left:51px;top:168px;background:#63cf86"></i><i class="sw" style="left:73px;top:168px;background:#fcf1cb"></i><i class="sw" style="left:7px;top:192px;background:#fbcfb2"></i><i class="sw" style="left:29px;top:192px;background:#efc142"></i><i class="sw" style="left:51px;top:192px;background:#f3a0e5"></i><i class="sw" style="left:73px;top:192px;background:#d4d5e0"></i><i class="sw" style="left:7px;top:216px;background:#a4a2b2"></i><i class="sw" style="left:29px;top:216px;background:#b5811a"></i><i class="sw" style="left:51px;top:216px;background:#c070c4"></i><i class="sw" style="left:73px;top:216px;background:#eee28d"></i><i class="sw" style="left:7px;top:240px;background:#3b76ab;box-shadow:0 0 4px 2px rgba(70,130,170,.7)"></i><i class="sw" style="left:29px;top:240px;background:#f5d43a"></i><i class="sw" style="left:51px;top:240px;background:#dcae9c"></i><i class="sw" style="left:73px;top:240px;background:#eec3d3"></i><i class="sw" style="left:7px;top:264px;background:#b0e8d0"></i><i class="sw" style="left:29px;top:264px;background:#c0de60"></i>
<div class="abs" style="left:5px;top:287px;width:94px;height:1px;background:#8a8386"></div>
<i class="sw" style="left:7px;top:293px;background:#b5201a"></i><i class="sw" style="left:29px;top:293px;background:#dd2a24"></i><i class="sw" style="left:51px;top:293px;background:#f07a65"></i><i class="sw" style="left:73px;top:293px;background:#fde0d0"></i><i class="sw" style="left:7px;top:317px;background:#d8265f"></i><i class="sw" style="left:29px;top:317px;background:#ef5e93"></i><i class="sw" style="left:51px;top:317px;background:#f7b9d3"></i><i class="sw" style="left:73px;top:317px;background:#fde5ea"></i><i class="sw" style="left:7px;top:341px;background:#e4511a"></i><i class="sw" style="left:29px;top:341px;background:#fb8a24"></i><i class="sw" style="left:51px;top:341px;background:#f9b62a"></i><i class="sw" style="left:73px;top:341px;background:#fbe9a8"></i><i class="sw" style="left:7px;top:365px;background:#168a1f"></i><i class="sw" style="left:29px;top:365px;background:#7ab23a"></i><i class="sw" style="left:51px;top:365px;background:#a8c12a"></i><i class="sw" style="left:73px;top:365px;background:#dff0c8"></i><i class="sw" style="left:7px;top:389px;background:#2d3fae"></i><i class="sw" style="left:29px;top:389px;background:#1e8fe0"></i><i class="sw" style="left:51px;top:389px;background:#54bdf5"></i><i class="sw" style="left:73px;top:389px;background:#b5e3fb"></i><i class="sw" style="left:7px;top:413px;background:#8a3fb8"></i><i class="sw" style="left:29px;top:413px;background:#a657c9"></i><i class="sw" style="left:51px;top:413px;background:#c9a3df"></i><i class="sw" style="left:73px;top:413px;background:#b86e5c"></i><i class="sw" style="left:7px;top:437px;background:#232328"></i><i class="sw" style="left:29px;top:437px;background:#7a7a7a"></i><i class="sw" style="left:51px;top:437px;background:#c4c4c4"></i><i class="sw" style="left:73px;top:437px;background:#f3f3f3"></i>
<svg class="abs" style="left:20px;top:466px" width="8" height="8" viewBox="0 0 8 8"><path d="M0.500 0.500L4 3.500L7.500 0.500M0.500 4L4 7L7.500 4" fill="none" stroke="#fff" stroke-width="1.300"/></svg><div class="abs" style="left:31px;top:460px;font-size:12px;font-weight:bold;line-height:18px;color:#fff;white-space:nowrap">更多配色</div><div class="abs" style="left:0;top:487px;width:99px;height:34px;background:rgba(255,255,255,.1);color:#eee;font-size:15px;line-height:33px;text-align:center">特色功能</div>
</div>
<svg id="logo" class="abs" style="left:10px;top:0" width="70" height="50" viewBox="10 0 70 50">
<polygon points="19.9,11.2 25.3,8.4 25.3,41.1 19.9,44.1" fill="#1f9be4"/>
<polygon points="19.9,11.2 25.3,8.4 25.3,14.6 19.9,16.2" fill="#f6b223"/>
<polygon points="32.4,7.8 36.1,6 46.6,11.2 42.1,13.8" fill="#f05a1e"/>
<polygon points="41.7,13.6 46.8,11.2 46.8,40.3 41.7,41.2" fill="#b2c63a"/>
<polygon points="41.7,24 46.8,22 46.8,29 41.7,30" fill="#6aa62e"/>
<polygon points="32,20 37,17.3 42,19.6 42,29.2 37.5,28.6 32,24.6" fill="#f7a823"/>
<polygon points="34,19.600 37,17.300 42,19.600 42,23 39,21.500" fill="#f5d03a"/>
<polygon points="32.4,35.1 36.1,33.2 42.1,36.6 42.1,41.2 40.6,40.7" fill="#1f9be4"/>
<polygon points="41.7,37 45,36.500 45,40.300 41.700,41.200" fill="#3a9a3a"/>
<polygon points="53.7,10.500 57.8,9.300 57.800,22.400 53.7,21.700" fill="#f05a1e"/>
<polygon points="56.3,9.3 59.3,8.6 67.5,13.8 63,16.4" fill="#b4c63a"/>
<polygon points="54,21.700 58.600,19.800 67.900,25 63.400,27.600" fill="#f7a81e"/>
<polygon points="63.2,27.600 68.100,25.200 68.100,41.800 63.200,44" fill="#ea4a1c"/>
<polygon points="63.2,36 68.100,34 68.100,41.800 63.200,44" fill="#d42e1a"/>
<polygon points="53.300,34.400 57.800,30.600 63.200,34 63.200,38.800 58,37 53.300,38" fill="#f0d03c"/>
<polygon points="53.300,34.400 56,32.500 56.500,37.300 53.300,38" fill="#3a9a3a"/>
<polygon points="53.700,37.900 58,36.800 63.200,38.800 63.200,44" fill="#1f9be4"/>
</svg>
</body>
</html>
